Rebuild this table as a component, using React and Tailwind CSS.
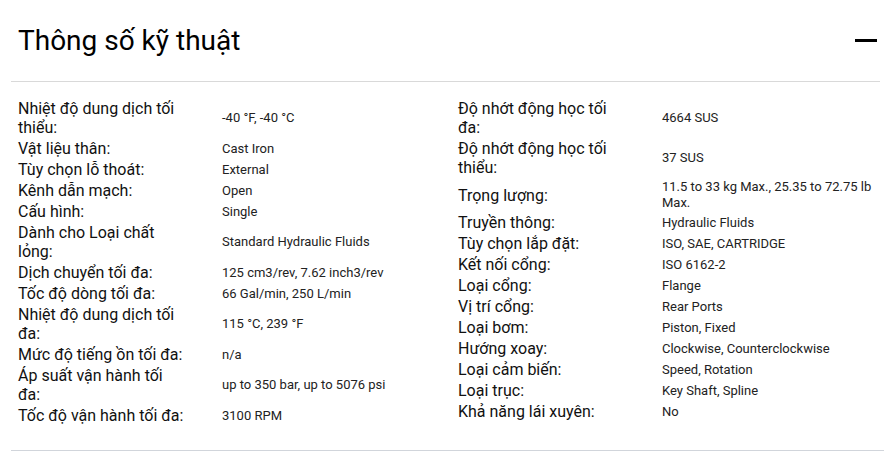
import React from "react";

const left = [
  ["Nhiệt độ dung dịch tối thiểu:", "-40 °F, -40 °C"],
  ["Vật liệu thân:", "Cast Iron"],
  ["Tùy chọn lỗ thoát:", "External"],
  ["Kênh dẫn mạch:", "Open"],
  ["Cấu hình:", "Single"],
  ["Dành cho Loại chất lỏng:", "Standard Hydraulic Fluids"],
  ["Dịch chuyển tối đa:", "125 cm3/rev, 7.62 inch3/rev"],
  ["Tốc độ dòng tối đa:", "66 Gal/min, 250 L/min"],
  ["Nhiệt độ dung dịch tối đa:", "115 °C, 239 °F"],
  ["Mức độ tiếng ồn tối đa:", "n/a"],
  ["Áp suất vận hành tối đa:", "up to 350 bar, up to 5076 psi"],
  ["Tốc độ vận hành tối đa:", "3100 RPM"],
];

const right = [
  ["Độ nhớt động học tối đa:", "4664 SUS"],
  ["Độ nhớt động học tối thiểu:", "37 SUS"],
  ["Trọng lượng:", "11.5 to 33 kg Max., 25.35 to 72.75 lb Max."],
  ["Truyền thông:", "Hydraulic Fluids"],
  ["Tùy chọn lắp đặt:", "ISO, SAE, CARTRIDGE"],
  ["Kết nối cổng:", "ISO 6162-2"],
  ["Loại cổng:", "Flange"],
  ["Vị trí cổng:", "Rear Ports"],
  ["Loại bơm:", "Piston, Fixed"],
  ["Hướng xoay:", "Clockwise, Counterclockwise"],
  ["Loại cảm biến:", "Speed, Rotation"],
  ["Loại trục:", "Key Shaft, Spline"],
  ["Khả năng lái xuyên:", "No"],
];

function Column({ rows }) {
  return (
    <div className="flex w-[420px] flex-col gap-[2px]">
      {rows.map(([k, v]) => (
        <div key={k} className="flex items-center">
          <div className="w-[204px] shrink-0 pr-[35px] text-[16px] leading-[19px] text-[#111]">
            {k}
          </div>
          <div className="w-[216px] text-[13px] leading-[16px] text-[#222]">{v}</div>
        </div>
      ))}
    </div>
  );
}

export default function App() {
  return (
    <div
      className="min-h-[459px] w-[884px] bg-white"
      style={{ fontFamily: "Roboto, 'Noto Sans', sans-serif" }}
    >
      <div className="ml-[11px] mr-[4px] flex h-[82px] items-center justify-between border-b border-[#d9d9d9] pl-[7px] pr-[3px]">
        <h2 className="text-[28px] leading-[34px] text-black">Thông số kỹ thuật</h2>
        <div className="mb-[1px] h-[3px] w-[22px] bg-black" />
      </div>
      <div className="ml-[11px] flex gap-[20px] border-b border-[#d1d5db] pb-[25px] pl-[7px] pt-[17px]">
        <Column rows={left} />
        <Column rows={right} />
      </div>
    </div>
  );
}
